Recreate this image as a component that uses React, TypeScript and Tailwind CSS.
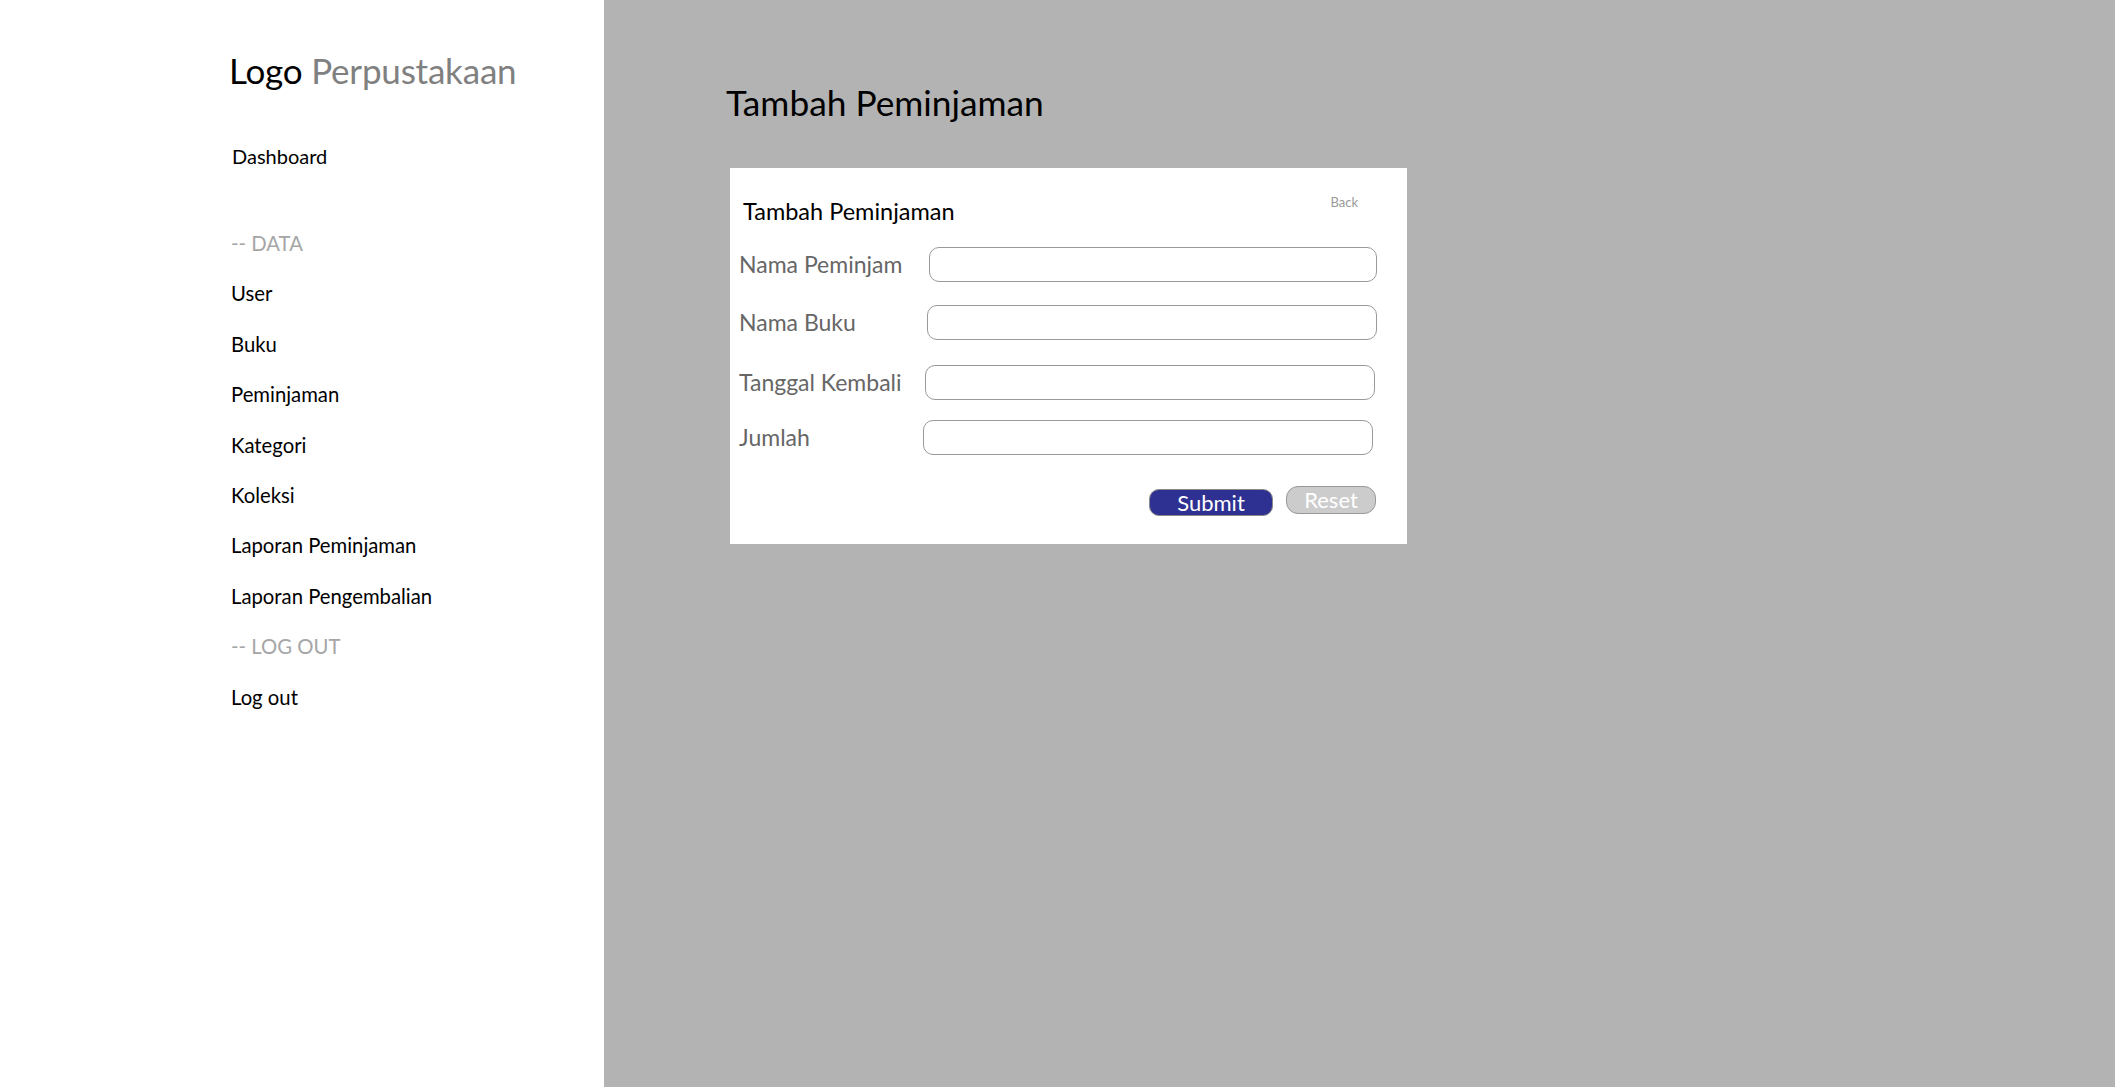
const navItems = [
  { label: '-- DATA', muted: true },
  { label: 'User' },
  { label: 'Buku' },
  { label: 'Peminjaman' },
  { label: 'Kategori' },
  { label: 'Koleksi' },
  { label: 'Laporan Peminjaman' },
  { label: 'Laporan Pengembalian' },
  { label: '-- LOG OUT', muted: true },
  { label: 'Log out' },
];

const fields = [
  { label: 'Nama Peminjam', rowClass: 'mt-[21px]', inputClass: 'ml-[2px]' },
  { label: 'Nama Buku', rowClass: 'mt-[23px]', inputClass: 'ml-0' },
  { label: 'Tanggal Kembali', rowClass: 'mt-[25px]', inputClass: 'ml-[-2px]' },
  { label: 'Jumlah', rowClass: 'mt-[20px]', inputClass: 'ml-[-4px]' },
];

function Sidebar() {
  return (
    <aside className="w-[604px] shrink-0 bg-white pl-[229px] pt-[48px]">
      <div className="text-[35px] leading-[44px] tracking-[-0.2px]">
        <span className="text-black">Logo</span>{' '}
        <span className="text-[#808080]">Perpustakaan</span>
      </div>
      <div className="mt-[39px] ml-[3px] h-[50px] text-[20px] leading-[50px] text-black">Dashboard</div>
      <nav className="mt-[37px] ml-[2px] flex flex-col">
        {navItems.map((item) => (
          <div
            key={item.label}
            className={`h-[50.4px] text-[20.3px] leading-[50.4px] ${item.muted ? 'text-[#a6a6a6]' : 'text-black'}`}
          >
            {item.label}
          </div>
        ))}
      </nav>
    </aside>
  );
}

function FormCard() {
  return (
    <div className="mt-[43px] ml-[4px] w-[677px] bg-white pt-[28px] pb-[28px] pl-[9px] pr-[30px]">
      <div className="flex items-start justify-between">
        <h2 className="ml-[4px] text-[23.5px] leading-[30px] text-black">Tambah Peminjaman</h2>
        <button className="mr-[19px] mt-[-2px] text-[13px] leading-[16px] text-[#999999]">Back</button>
      </div>
      {fields.map((f) => (
        <div key={f.label} className={`flex h-[35px] items-center ${f.rowClass}`}>
          <label className="w-[188px] shrink-0 text-[23px] text-[#666666]">{f.label}</label>
          <input
            className={`h-[35px] w-[450px] rounded-[10px] border border-[#999999] bg-white px-3 outline-none ${f.inputClass}`}
          />
        </div>
      ))}
      <div className="mt-[31px] flex items-start justify-end gap-[13px] pr-[1px]">
        <button className="mt-[3px] h-[27px] w-[124px] rounded-[10px] border border-[#8a8a8a] bg-[#2e3192] text-[22px] leading-[24px] text-white">
          Submit
        </button>
        <button className="h-[28px] w-[90px] rounded-[12px] border border-[#999999] bg-[#cccccc] text-[22px] leading-[24px] text-white">
          Reset
        </button>
      </div>
    </div>
  );
}

export default function App() {
  return (
    <div className="flex h-[1087px] w-full overflow-hidden font-['Lato','Open_Sans',sans-serif]">
      <Sidebar />
      <main className="flex-1 bg-[#b3b3b3] pl-[122px] pt-[81px]">
        <h1 className="text-[35.3px] leading-[44px] text-black">Tambah Peminjaman</h1>
        <FormCard />
      </main>
    </div>
  );
}
